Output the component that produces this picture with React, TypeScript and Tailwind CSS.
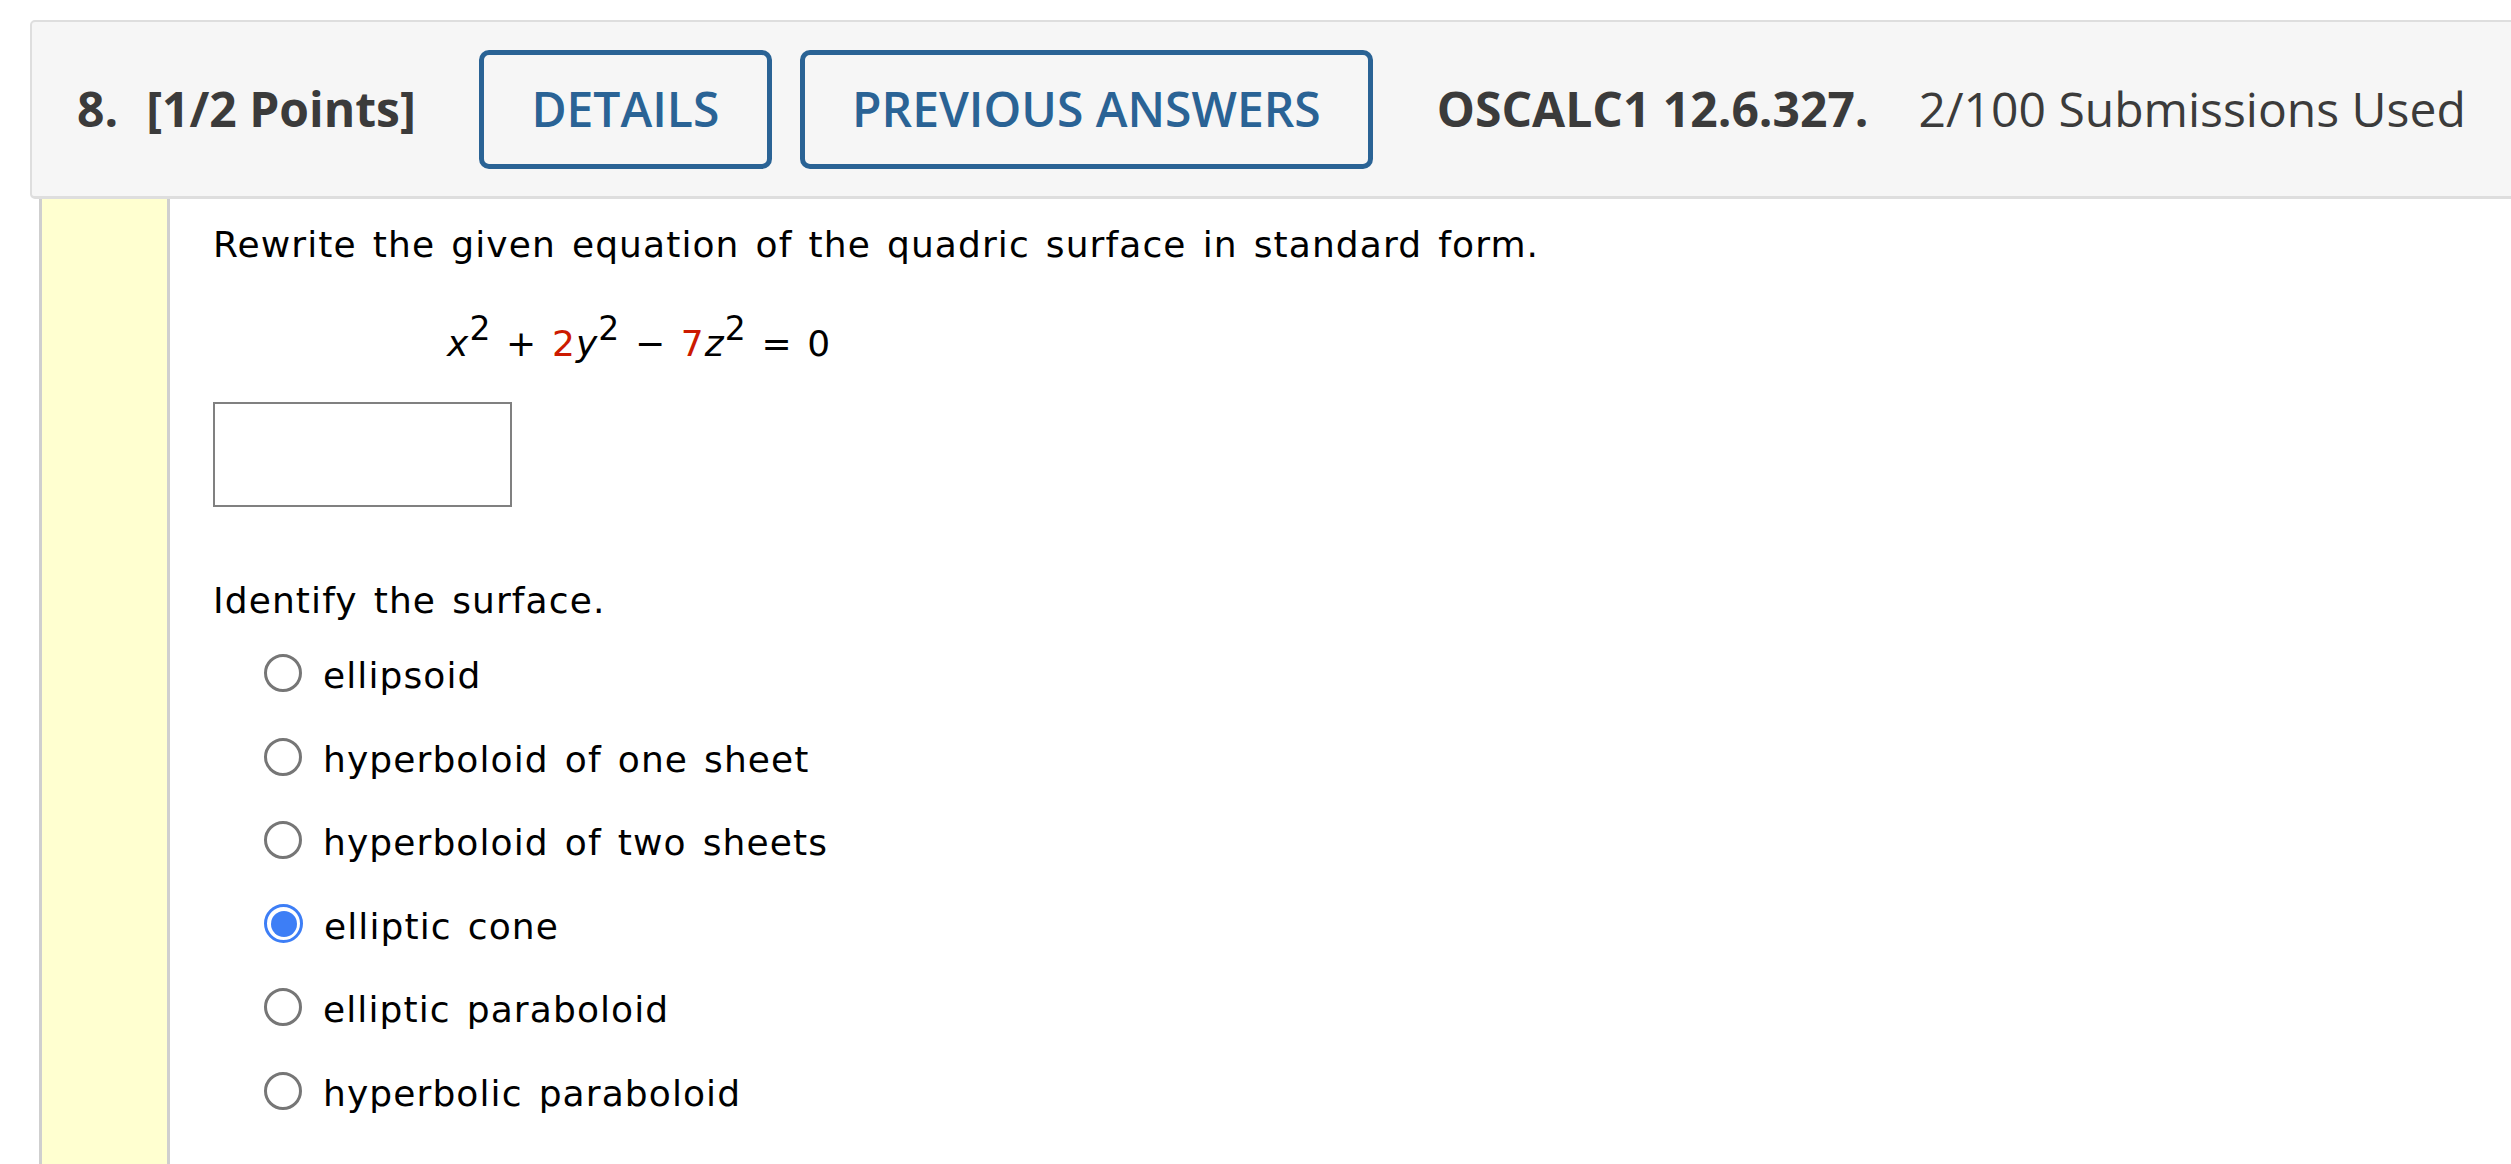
import React from "react";

const body = { fontFamily: '"DejaVu Sans", Verdana, sans-serif' };
const head = { fontFamily: '"Open Sans", "Liberation Sans", sans-serif' };

function Radio({ checked }: { checked?: boolean }) {
  if (checked) {
    return (
      <div className="w-[39px] h-[39px] rounded-full border-[3px] border-[#3d7ef6] bg-white flex items-center justify-center shrink-0 -mt-[6px]">
        <div className="w-[26px] h-[26px] rounded-full bg-[#3d7ef6]" />
      </div>
    );
  }
  return <div className="w-[38px] h-[38px] rounded-full border-[3px] border-[#767676] bg-white shrink-0 -mt-[6px]" />;
}

const options = [
  { label: "ellipsoid" },
  { label: "hyperboloid of one sheet" },
  { label: "hyperboloid of two sheets" },
  { label: "elliptic cone", checked: true },
  { label: "elliptic paraboloid" },
  { label: "hyperbolic paraboloid" },
];

function Sup() {
  return <span className="relative -top-[16px] text-[33px] not-italic">2</span>;
}

export default function App() {
  return (
    <div className="w-[2511px] h-[1164px] bg-white overflow-hidden flex flex-col">
      <div className="pt-[20px] pl-[30px]">
        <div
          className="w-[2500px] h-[179px] bg-[#f6f6f6] border-2 border-b-[3px] border-[#dedede] rounded-[5px] flex items-center pl-[45px] text-[#3b3b3b]"
          style={head}
        >
          <span className="text-[48px] font-bold">8.</span>
          <span className="text-[48px] font-bold ml-[28px]">[1/2 Points]</span>
          <div className="ml-[63px] w-[293px] h-[119px] border-[5px] border-[#2a6395] rounded-[10px] flex items-center justify-center text-[48px] text-[#2a6395] font-semibold">
            DETAILS
          </div>
          <div className="ml-[28px] w-[573px] h-[119px] border-[5px] border-[#2a6395] rounded-[10px] flex items-center justify-center text-[48px] text-[#2a6395] font-semibold">
            PREVIOUS ANSWERS
          </div>
          <span className="ml-[64px] text-[48px] font-bold">OSCALC1 12.6.327.</span>
          <span className="ml-[50px] text-[48px]">2/100 Submissions Used</span>
        </div>
      </div>
      <div className="flex flex-1 min-h-0">
        <div className="ml-[39px] w-[131px] bg-[#ffffd0] border-l-[3px] border-r-[3px] border-[#cfcfcf]" />
        <div
          className="pl-[43px] flex flex-col text-black text-[36px] tracking-[1.1px] [word-spacing:3.5px]"
          style={body}
        >
          <div className="mt-[24px] leading-[44px]">
            Rewrite the given equation of the quadric surface in standard form.
          </div>
          <div className="mt-[55px] ml-[234px] h-[44px] leading-[44px] whitespace-nowrap [word-spacing:2px]">
            <i>x</i>
            <Sup /> + <span className="text-[#cc1a00]">2</span>
            <i>y</i>
            <Sup /> &minus; <span className="text-[#cc1a00]">7</span>
            <i>z</i>
            <Sup /> = 0
          </div>
          <div className="mt-[36px] w-[299px] h-[105px] border-2 border-[#808080] bg-white" />
          <div className="mt-[72px] leading-[44px]">Identify the surface.</div>
          <div className="mt-[31px] ml-[51px] flex flex-col gap-[39.6px]">
            {options.map((o) => (
              <div key={o.label} className="flex items-center h-[44px] leading-[44px]">
                <Radio checked={o.checked} />
                <span className="ml-[21px]">{o.label}</span>
              </div>
            ))}
          </div>
        </div>
      </div>
    </div>
  );
}
